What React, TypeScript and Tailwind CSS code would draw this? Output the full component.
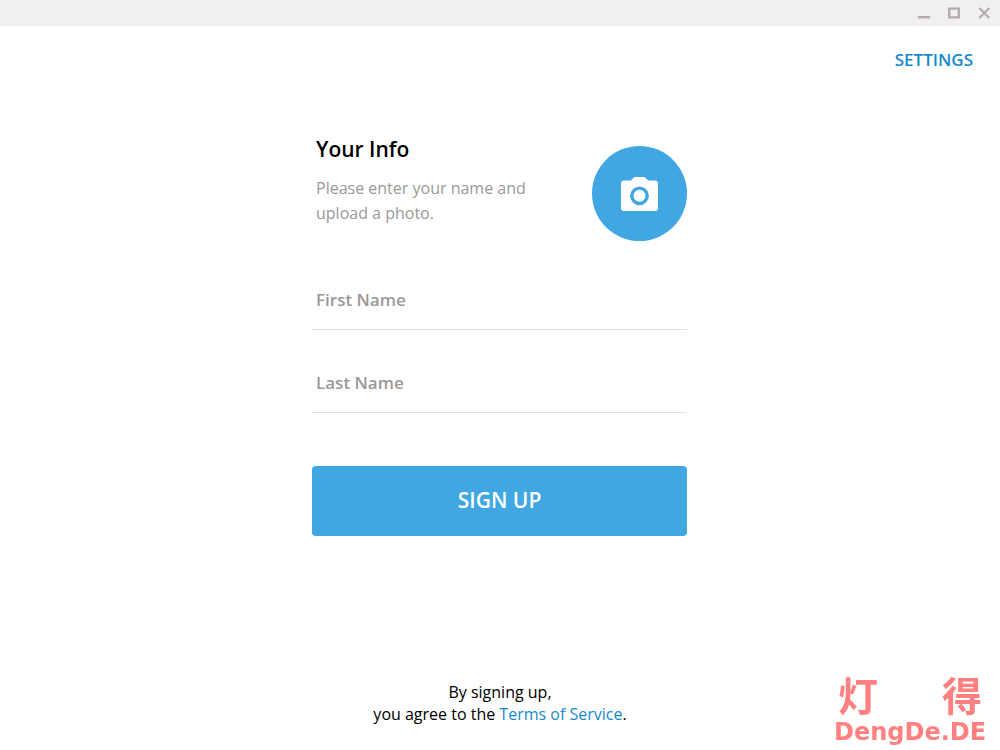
import type { ReactNode } from "react";

function WindowButton({ label, children }: { label: string; children: ReactNode }) {
  return (
    <button type="button" aria-label={label} className="flex h-full w-[30px] items-center justify-center text-[#b5abab]">
      <svg viewBox="0 0 14 14" className="size-3.5" fill="none" stroke="currentColor" strokeWidth="2">
        {children}
      </svg>
    </button>
  );
}

function TitleBar() {
  return (
    <header className="flex h-[26px] shrink-0 justify-end bg-[#f0f0f0] pr-px">
      <WindowButton label="Minimize">
        <path d="M1 11.2H13" strokeWidth="2.4" />
      </WindowButton>
      <WindowButton label="Maximize">
        <path d="M2.2 2.6H11.8V11.4H2.2Z" strokeWidth="2.4" />
      </WindowButton>
      <WindowButton label="Close">
        <path d="M2.3 2L12.3 12M12.3 2L2.3 12" />
      </WindowButton>
    </header>
  );
}

function CameraIcon() {
  return (
    <svg viewBox="0 0 38 36" className="h-9 w-[38px]">
      <path
        fill="#fff"
        d="M3 4.5H10L12.5 1.8Q13.2 1 14.3 1H22.7Q23.8 1 24.5 1.8L27 4.5H34Q37 4.5 37 7.5V32Q37 35 34 35H3Q0 35 0 32V7.5Q0 4.5 3 4.5Z"
      />
      <circle cx="18.5" cy="19.8" r="7.7" fill="#fff" stroke="#40a7e3" strokeWidth="3.4" />
    </svg>
  );
}

function Field({ label, name }: { label: string; name: string }) {
  return (
    <input
      type="text"
      name={name}
      aria-label={label}
      placeholder={label}
      className="block h-[60px] w-full border-b border-[#e0e0e0] bg-transparent px-1 text-[17px] font-semibold text-black outline-none placeholder:text-[#999] placeholder:opacity-100 focus:border-[#40a7e3]"
    />
  );
}

export default function App() {
  return (
    <div className="flex min-h-screen flex-col bg-white font-['Open_Sans',sans-serif] text-base text-black">
      <TitleBar />
      <nav className="flex justify-end px-[27px] pt-[22px]">
        <button type="button" className="text-[17px] font-semibold leading-6 text-[#168acd]">
          SETTINGS
        </button>
      </nav>

      <main className="mx-auto flex w-full max-w-[376px] flex-col pr-px pt-[62px]">
        <div className="flex justify-between">
          <div className="pl-1">
            <h1 className="text-[21px] font-semibold leading-[30px]">Your Info</h1>
            <p className="mt-3 w-[230px] leading-[25px] text-[#999]">
              Please enter your name and upload a photo.
            </p>
          </div>
          <button
            type="button"
            aria-label="Upload a photo"
            className="mt-3 flex size-[95px] shrink-0 items-center justify-center rounded-full bg-[#40a7e3]"
          >
            <CameraIcon />
          </button>
        </div>

        <form className="mt-[29px]" onSubmit={(event) => event.preventDefault()}>
          <div className="flex flex-col gap-[23px]">
            <Field label="First Name" name="firstName" />
            <Field label="Last Name" name="lastName" />
          </div>
          <button
            type="submit"
            className="mt-[53px] h-[70px] w-full rounded bg-[#40a7e3] text-[21px] font-semibold text-white"
          >
            SIGN UP
          </button>
        </form>
      </main>

      <footer className="mt-auto pb-[25px] pt-8 text-center leading-[22px]">
        <p>
          By signing up,
          <br />
          you agree to the{" "}
          <a href="#terms" className="text-[#168acd]">
            Terms of Service
          </a>
          .
        </p>
      </footer>

      <div className="fixed bottom-1 right-3.5 flex w-[152px] flex-col gap-1 text-[#ff8080]">
        <div className="flex justify-between px-1 font-['Noto_Sans_CJK_SC',sans-serif] text-[40px] font-bold leading-[40px]">
          <span>灯</span>
          <span>得</span>
        </div>
        <div className="font-['DejaVu_Sans',sans-serif] text-2xl font-bold leading-7">DengDe.DE</div>
      </div>
    </div>
  );
}
